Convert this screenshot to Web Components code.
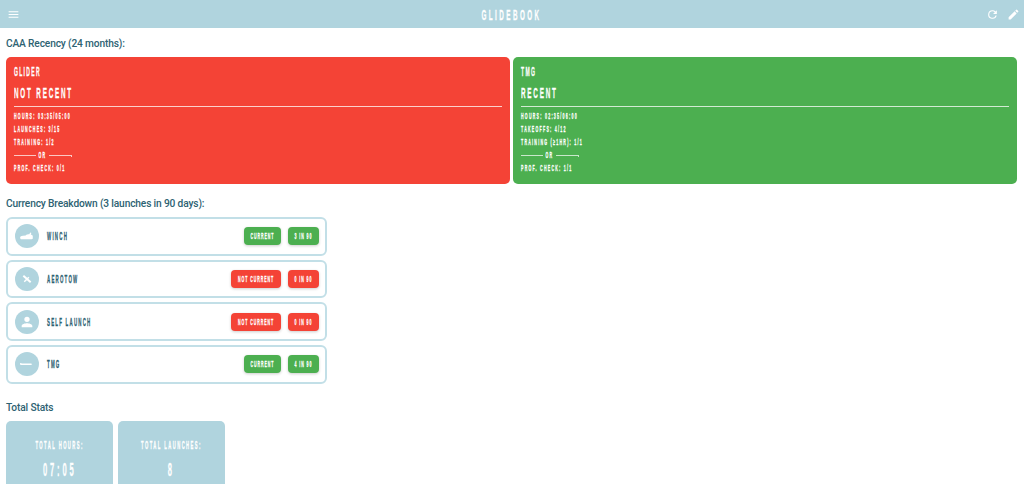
<!DOCTYPE html>
<html>
<head>
<meta charset="utf-8">
<title>Glidebook</title>
<style>
html, body { margin: 0; height: 100%; overflow: hidden; background: #fff; }
body { font-family: Roboto, "Liberation Sans", sans-serif; }
</style>
</head>
<body>
<gb-appbar title-text="GLIDEBOOK"></gb-appbar>
<gb-page>
  <gb-section heading="CAA Recency (24 months):">
    <gb-recency-grid>
      <gb-recency status="red" kind="GLIDER" state="NOT RECENT">
        <gb-cond>HOURS: 03:35/05:00</gb-cond>
        <gb-cond>LAUNCHES: 3/15</gb-cond>
        <gb-cond>TRAINING: 1/2</gb-cond>
        <gb-or></gb-or>
        <gb-cond>PROF. CHECK: 0/1</gb-cond>
      </gb-recency>
      <gb-recency status="green" kind="TMG" state="RECENT">
        <gb-cond>HOURS: 02:35/06:00</gb-cond>
        <gb-cond>TAKEOFFS: 4/12</gb-cond>
        <gb-cond>TRAINING (≥1HR): 1/1</gb-cond>
        <gb-or></gb-or>
        <gb-cond>PROF. CHECK: 1/1</gb-cond>
      </gb-recency>
    </gb-recency-grid>
  </gb-section>
  <gb-section heading="Currency Breakdown (3 launches in 90 days):">
    <gb-list>
      <gb-row icon="winch" label="WINCH" status="green" state="CURRENT" count="3 IN 90"></gb-row>
      <gb-row icon="aerotow" label="AEROTOW" status="red" state="NOT CURRENT" count="0 IN 90"></gb-row>
      <gb-row icon="self" label="SELF LAUNCH" status="red" state="NOT CURRENT" count="0 IN 90"></gb-row>
      <gb-row icon="tmg" label="TMG" status="green" state="CURRENT" count="4 IN 90"></gb-row>
    </gb-list>
  </gb-section>
  <gb-section heading="Total Stats">
    <gb-stats>
      <gb-stat label="TOTAL HOURS:" value="07:05"></gb-stat>
      <gb-stat label="TOTAL LAUNCHES:" value="8"></gb-stat>
    </gb-stats>
  </gb-section>
</gb-page>

<script>
// no condensed font installed, so squeeze the sans and open up the spacing
class GbCond extends HTMLElement{
    constructor(){
        super();
        this.attachShadow({mode: 'open'});
        this.shadowRoot.innerHTML = `
        <style>
        :host{ display: inline-block; flex: none; align-self: flex-start; white-space: nowrap; font-family: "Liberation Sans", sans-serif; font-weight: 700; -webkit-text-stroke: .3px currentColor; transform: scaleX(.42); transform-origin: left center; }
        :host([center]){ align-self: center; transform-origin: center center; }
        </style>
        <slot></slot>`;
    }
}
customElements.define('gb-cond', GbCond);

class GbAppbar extends HTMLElement{
    constructor(){
        super();
        this.attachShadow({mode: 'open'});
        this.shadowRoot.innerHTML = `
        <style>
        :host{ display: flex; align-items: center; justify-content: space-between; position: relative; height: 28px; background: #b0d4de; padding: 0 4px 0 7px; box-sizing: border-box; color: #fff; }
        .title{ position: absolute; left: 0; right: 0; display: flex; justify-content: center; font-size: 15px; letter-spacing: 5.8px; }
        .right{ display: flex; gap: 8.5px; }
        svg{ width: 13px; height: 13px; fill: #fff; display: block; position: relative; }
        </style>
        <svg viewBox="0 0 24 24"><path d="M3 18h18v-2H3v2zm0-5h18v-2H3v2zm0-7v2h18V6H3z"/></svg>
        <div class="title"><gb-cond center>${this.getAttribute('title-text')}</gb-cond></div>
        <div class="right">
            <svg viewBox="0 0 24 24"><path d="M17.65 6.35A7.96 7.96 0 0 0 12 4a8 8 0 1 0 7.73 10h-2.08A6 6 0 1 1 12 6c1.66 0 3.14.69 4.22 1.78L13 11h7V4l-2.35 2.35z"/></svg>
            <svg viewBox="0 0 24 24"><path d="M3 17.25V21h3.75L17.81 9.94l-3.75-3.75L3 17.25zM20.71 7.04a1 1 0 0 0 0-1.41l-2.34-2.34a1 1 0 0 0-1.41 0l-1.83 1.83 3.75 3.75 1.83-1.83z"/></svg>
        </div>`;
    }
}
customElements.define('gb-appbar', GbAppbar);

class GbPage extends HTMLElement{
    constructor(){
        super();
        this.attachShadow({mode: 'open'});
        this.shadowRoot.innerHTML = `
        <style>
        :host{ display: flex; flex-direction: column; padding: 9px 7px 0 6px; gap: 13px; }
        </style>
        <slot></slot>`;
    }
}
customElements.define('gb-page', GbPage);

class GbSection extends HTMLElement{
    constructor(){
        super();
        this.attachShadow({mode: 'open'});
        this.shadowRoot.innerHTML = `
        <style>
        :host{ display: block; }
        h2{ margin: 0 0 7px; font-size: 10.2px; letter-spacing: -.15px; line-height: 13px; font-weight: 500; color: #2d6272; height: 13px; }
        </style>
        <h2>${this.getAttribute('heading')}</h2>
        <slot></slot>`;
    }
}
customElements.define('gb-section', GbSection);

class GbRecencyGrid extends HTMLElement{
    constructor(){
        super();
        this.attachShadow({mode: 'open'});
        this.shadowRoot.innerHTML = `
        <style>
        :host{ display: grid; grid-template-columns: 504px 504px; gap: 3px; }
        </style>
        <slot></slot>`;
    }
}
customElements.define('gb-recency-grid', GbRecencyGrid);

class GbRecency extends HTMLElement{
    constructor(){
        super();
        this.attachShadow({mode: 'open'});
        this.shadowRoot.innerHTML = `
        <style>
        :host{ display: block; height: 127px; box-sizing: border-box; border-radius: 5px; padding: 9px 8px 0; color: #fff; }
        :host([status=red]){ background: #f44336; }
        :host([status=green]){ background: #4caf50; }
        .kind{ display: flex; font-size: 12px; line-height: 13px; letter-spacing: 3.1px; }
        .state{ display: flex; font-size: 15px; line-height: 14px; letter-spacing: 4.3px; margin-top: 7px; }
        hr{ border: 0; height: 1px; background: rgba(255,255,255,.75); margin: 6px 0 3px; }
        .lines{ display: flex; flex-direction: column; font-size: 8.5px; line-height: 13px; letter-spacing: 3px; }
        </style>
        <div class="kind"><gb-cond>${this.getAttribute('kind')}</gb-cond></div>
        <div class="state"><gb-cond>${this.getAttribute('state')}</gb-cond></div>
        <hr>
        <div class="lines"><slot></slot></div>`;
    }
}
customElements.define('gb-recency', GbRecency);

class GbOr extends HTMLElement{
    constructor(){
        super();
        this.attachShadow({mode: 'open'});
        this.shadowRoot.innerHTML = `
        <style>
        :host{ display: grid; grid-template-columns: 22px 13px 23px; align-items: center; width: 58px; height: 13px; }
        i{ height: 1px; background: rgba(255,255,255,.7); }
        div{ display: flex; justify-content: center; }
        i:last-child{ position: relative; }
        i:last-child::after{ content: ""; position: absolute; right: 0; top: 1px; width: 1px; height: 1px; background: rgba(255,255,255,.7); }
        </style>
        <i></i><div><gb-cond center>OR</gb-cond></div><i></i>`;
    }
}
customElements.define('gb-or', GbOr);

class GbList extends HTMLElement{
    constructor(){
        super();
        this.attachShadow({mode: 'open'});
        this.shadowRoot.innerHTML = `
        <style>
        :host{ display: flex; flex-direction: column; gap: 4px; width: 321px; margin-bottom: 4px; }
        </style>
        <slot></slot>`;
    }
}
customElements.define('gb-list', GbList);

const rowIcons = {
    winch: '<path d="M4.5 13.5c0-1 1.5-1.5 3-1.7l3-.3c1-1 2.5-1.3 4-1.3l1-2 1.3.4-.7 1.7c1 .3 1.7.8 2.2 1.5v2.7c0 .7-.5 1-1.2 1H6c-1 0-1.5-.8-1.5-2z"/>',
    aerotow: '<path d="M8 8.5L16 15.5" stroke="#fff" stroke-width="2.2" fill="none"/><path d="M9 15L14 10" stroke="#fff" stroke-width="1.6" fill="none"/>',
    self: '<path d="M12 12a4 4 0 1 0 0-8 4 4 0 0 0 0 8zm0 2c-2.7 0-8 1.3-8 4v2h16v-2c0-2.7-5.3-4-8-4z"/>',
    tmg: '<path d="M4.5 10.8h1l.8.7h9c1 0 2 .2 2.4.5-.4.8-1.4 1.2-2.4 1.2H6l-1.5-.5z"/>'
};

class GbRow extends HTMLElement{
    constructor(){
        super();
        this.attachShadow({mode: 'open'});
        this.shadowRoot.innerHTML = `
        <style>
        :host{ display: flex; align-items: center; height: 38.67px; box-sizing: border-box; border: 2px solid #c2dfe7; border-radius: 6px; padding: 0 6px 0 7px; }
        .avatar{ width: 24px; height: 24px; border-radius: 50%; background: #b0d4de; display: flex; align-items: center; justify-content: center; }
        .avatar svg{ width: 22px; height: 22px; fill: #fff; }
        :host([icon=self]) .avatar svg{ width: 16px; height: 16px; }
        .label{ flex: 1; display: flex; margin-left: 8px; font-size: 10.5px; letter-spacing: 2.9px; color: #2d6272; }
        .chips{ display: flex; gap: 7px; }
        </style>
        <div class="avatar"><svg viewBox="0 0 24 24">${rowIcons[this.getAttribute('icon')]}</svg></div>
        <div class="label"><gb-cond>${this.getAttribute('label')}</gb-cond></div>
        <div class="chips">
            <gb-chip status="${this.getAttribute('status')}" style="width:${this.getAttribute('status') == 'red' ? 50 : 37}px">${this.getAttribute('state')}</gb-chip>
            <gb-chip status="${this.getAttribute('status')}" style="width:31px">${this.getAttribute('count')}</gb-chip>
        </div>`;
    }
}

class GbChip extends HTMLElement{
    constructor(){
        super();
        this.attachShadow({mode: 'open'});
        this.shadowRoot.innerHTML = `
        <style>
        :host{ display: flex; align-items: center; justify-content: center; height: 18px; border-radius: 4px; color: #fff; font-size: 8.5px; letter-spacing: 2.2px; box-shadow: 0 1px 3px rgba(0,0,0,.2); }
        :host([status=red]){ background: #f44336; }
        :host([status=green]){ background: #4caf50; }
        </style>
        <gb-cond center><slot></slot></gb-cond>`;
    }
}
customElements.define('gb-chip', GbChip);
customElements.define('gb-row', GbRow);

class GbStats extends HTMLElement{
    constructor(){
        super();
        this.attachShadow({mode: 'open'});
        this.shadowRoot.innerHTML = `
        <style>
        :host{ display: flex; gap: 5px; }
        </style>
        <slot></slot>`;
    }
}
customElements.define('gb-stats', GbStats);

class GbStat extends HTMLElement{
    constructor(){
        super();
        this.attachShadow({mode: 'open'});
        this.shadowRoot.innerHTML = `
        <style>
        :host{ display: flex; flex-direction: column; align-items: center; width: 107px; height: 63px; border-radius: 5px 5px 0 0; background: #b0d4de; color: #fff; box-sizing: border-box; padding-top: 20px; }
        .label{ display: flex; justify-content: center; width: 100%; font-size: 10px; line-height: 10px; letter-spacing: 3.4px; }
        .value{ display: flex; justify-content: center; width: 100%; font-size: 18px; line-height: 18px; letter-spacing: 6.7px; margin-top: 10px; }
        </style>
        <div class="label"><gb-cond center>${this.getAttribute('label')}</gb-cond></div>
        <div class="value"><gb-cond center>${this.getAttribute('value')}</gb-cond></div>`;
    }
}
customElements.define('gb-stat', GbStat);
</script>
</body>
</html>
